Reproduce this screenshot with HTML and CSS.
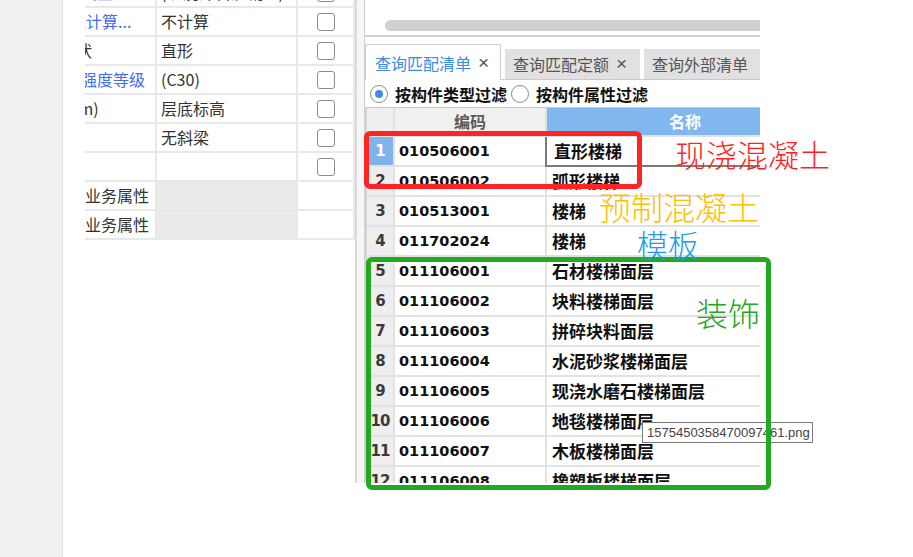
FILE: index.html
```html
<!DOCTYPE html>
<html lang="zh-CN">
<head>
<meta charset="utf-8">
<title>查询匹配清单</title>
<link rel="stylesheet" href="styles.css">
</head>
<body>
<div class="page">
  <aside class="margin"></aside>
  <main class="doc">
    <div class="shot">
      <section class="props">
        <div class="prow">
          <div class="pname blue"><span class="in-a">混凝土类型</span></div>
          <div class="pval">(现浇碎石混凝土)</div>
          <div class="pchk"><span class="cb"></span></div>
        </div>
        <div class="prow">
          <div class="pname blue"><span class="in-b">建筑面积计算...</span></div>
          <div class="pval">不计算</div>
          <div class="pchk"><span class="cb"></span></div>
        </div>
        <div class="prow">
          <div class="pname"><span class="in-c">图元形状</span></div>
          <div class="pval">直形</div>
          <div class="pchk"><span class="cb"></span></div>
        </div>
        <div class="prow">
          <div class="pname blue"><span class="in-a">混凝土强度等级</span></div>
          <div class="pval">(C30)</div>
          <div class="pchk"><span class="cb"></span></div>
        </div>
        <div class="prow">
          <div class="pname"><span class="in-d">底标高(m)</span></div>
          <div class="pval">层底标高</div>
          <div class="pchk"><span class="cb"></span></div>
        </div>
        <div class="prow">
          <div class="pname"><span class="in-h">斜梁</span></div>
          <div class="pval">无斜梁</div>
          <div class="pchk"><span class="cb"></span></div>
        </div>
        <div class="prow">
          <div class="pname"><span class="in-h">备注</span></div>
          <div class="pval"></div>
          <div class="pchk"><span class="cb"></span></div>
        </div>
        <div class="prow">
          <div class="pname"><span class="in-g">钢筋业务属性</span></div>
          <div class="pval gray"></div>
          <div class="pchk"></div>
        </div>
        <div class="prow">
          <div class="pname"><span class="in-g">土建业务属性</span></div>
          <div class="pval gray"></div>
          <div class="pchk"></div>
        </div>
      </section>

      <div class="splitter"></div>

      <section class="query">
        <div class="toppanel"><div class="hscroll"></div></div>
        <div class="tabs">
          <div class="tab active">查询匹配清单<span class="x">×</span></div>
          <div class="tab">查询匹配定额<span class="x">×</span></div>
          <div class="tab">查询外部清单</div>
        </div>
        <div class="filters">
          <label class="radio"><span class="rb on"></span>按构件类型过滤</label>
          <label class="radio"><span class="rb"></span>按构件属性过滤</label>
        </div>
        <div class="grid">
          <div class="grow head"><div class="rn"></div><div class="code">编码</div><div class="name">名称</div></div>
          <div class="grow sel"><div class="rn">1</div><div class="code">010506001</div><div class="name">直形楼梯</div></div>
          <div class="grow"><div class="rn">2</div><div class="code">010506002</div><div class="name">弧形楼梯</div></div>
          <div class="grow"><div class="rn">3</div><div class="code">010513001</div><div class="name">楼梯</div></div>
          <div class="grow"><div class="rn">4</div><div class="code">011702024</div><div class="name">楼梯</div></div>
          <div class="grow"><div class="rn">5</div><div class="code">011106001</div><div class="name">石材楼梯面层</div></div>
          <div class="grow"><div class="rn">6</div><div class="code">011106002</div><div class="name">块料楼梯面层</div></div>
          <div class="grow"><div class="rn">7</div><div class="code">011106003</div><div class="name">拼碎块料面层</div></div>
          <div class="grow"><div class="rn">8</div><div class="code">011106004</div><div class="name">水泥砂浆楼梯面层</div></div>
          <div class="grow"><div class="rn">9</div><div class="code">011106005</div><div class="name">现浇水磨石楼梯面层</div></div>
          <div class="grow"><div class="rn">10</div><div class="code">011106006</div><div class="name">地毯楼梯面层</div></div>
          <div class="grow"><div class="rn">11</div><div class="code">011106007</div><div class="name">木板楼梯面层</div></div>
          <div class="grow"><div class="rn">12</div><div class="code">011106008</div><div class="name">橡塑板楼梯面层</div></div>
        </div>
      </section>
    </div>
  </main>

  <div class="tooltip">1575450358470097461.png</div>
  <div class="mark mark-red"></div>
  <div class="mark mark-green"></div>
  <div class="note note-red">现浇混凝土</div>
  <div class="note note-orange">预制混凝土</div>
  <div class="note note-blue">模板</div>
  <div class="note note-green">装饰</div>
</div>
</body>
</html>
```

FILE: styles.css
```css
* { box-sizing: border-box; margin: 0; padding: 0; }

html, body {
  width: 913px;
  height: 557px;
  overflow: hidden;
  background: #ffffff;
}

body {
  font-family: "Noto Sans CJK SC", "Noto Sans", sans-serif;
  color: #333333;
}

.page {
  position: relative;
  display: flex;
  width: 913px;
  height: 557px;
}

.margin {
  flex: none;
  width: 63px;
  background: #eff0f2;
  border-right: 1px solid #e3e4e7;
}

.doc {
  flex: 1;
  padding-left: 22px;
  background: #ffffff;
}

.shot {
  display: flex;
  width: 675px;
  height: 483px;
  overflow: hidden;
  background: #ffffff;
}

/* ---------- property grid (left) ---------- */
.props {
  flex: none;
  width: 270px;
  margin-top: -21px;
  align-self: flex-start;
}

.prow {
  display: grid;
  grid-template-columns: 72px 141px 57px;
  height: 29px;
}

.prow > div {
  border-right: 2px solid #e8e8e8;
  border-bottom: 2px solid #e8e8e8;
  font-size: 16px;
  line-height: 27px;
  white-space: nowrap;
  overflow: hidden;
}

.pname { color: #333333; }
.pname.blue { color: #3f6cf2; }
.pname span { display: inline-block; }
.in-a { margin-left: -52px; }
.in-b { margin-left: -63px; }
.in-c { margin-left: -57px; }
.in-d { margin-left: -60px; }
.in-g { margin-left: -32px; }
.in-h { margin-left: -60px; }

.pval { padding-left: 4px; color: #333333; }
.pval.gray { background: #ebebeb; }

.pchk {
  display: flex;
  align-items: center;
  justify-content: center;
}

.cb {
  display: block;
  width: 18px;
  height: 18px;
  border: 1.5px solid #8c8c8c;
  border-radius: 3px;
  background: #ffffff;
}

/* ---------- splitter ---------- */
.splitter {
  flex: none;
  width: 10px;
  background: #f6f6f6;
  border-left: 2px solid #d9d9d9;
  border-right: 1px solid #cfcfcf;
}

/* ---------- query pane (right) ---------- */
.query {
  flex: none;
  width: 395px;
  overflow: hidden;
  display: flex;
  flex-direction: column;
}

.query > * { flex: none; }

.toppanel {
  height: 37px;
  padding: 20px 0 0 20px;
  border-bottom: 2px solid #d2d2d2;
}

.hscroll {
  width: 520px;
  height: 11px;
  border-radius: 6px;
  background: #cfcfcf;
}

.tabs {
  display: flex;
  align-items: flex-end;
  gap: 4px;
  height: 43px;
  border-bottom: 1px solid #c9c9c9;
}

.tab {
  flex: none;
  display: flex;
  align-items: center;
  height: 30px;
  width: 135px;
  padding-left: 8px;
  background: #e1e1e1;
  color: #555555;
  font-size: 16px;
  white-space: nowrap;
}

.tab.active {
  height: 36px;
  width: 136px;
  padding-left: 9px;
  background: #ffffff;
  color: #3b8be2;
  border: 1px solid #cccccc;
  border-bottom: none;
  border-radius: 2px 2px 0 0;
  margin-bottom: -1px;
}

.tab .x {
  margin-left: 7px;
  font-family: "Liberation Sans", sans-serif;
  font-size: 19px;
  color: #555555;
}

.filters {
  display: flex;
  align-items: center;
  height: 27px;
  padding-left: 5px;
  gap: 4px;
}

.radio {
  display: flex;
  align-items: center;
  gap: 7px;
  font-size: 16px;
  font-weight: 700;
  color: #111111;
  white-space: nowrap;
}

.rb {
  display: flex;
  align-items: center;
  justify-content: center;
  width: 18px;
  height: 18px;
  border: 1.5px solid #8c8c8c;
  border-radius: 50%;
  background: #ffffff;
}

.rb.on::after {
  content: "";
  width: 8px;
  height: 8px;
  border-radius: 50%;
  background: #3a8ee8;
}

.grid {
  width: 460px;
  border-left: 2px solid #d4d4d4;
}

.grow {
  display: grid;
  grid-template-columns: 28px 152px 278px;
  height: 30px;
}

.grow > div {
  border-bottom: 2px solid #e2e2e2;
  border-right: 2px solid #e2e2e2;
  white-space: nowrap;
  overflow: hidden;
  line-height: 28px;
}

.rn {
  background: #eeeeee;
  text-align: center;
  font-family: "DejaVu Sans", sans-serif;
  font-weight: 700;
  font-size: 15px;
  color: #3a3a3a;
  letter-spacing: -1px;
}

.code {
  padding-left: 4px;
  font-family: "DejaVu Sans", sans-serif;
  font-weight: 700;
  font-size: 14.5px;
  color: #111111;
}

.name {
  padding-left: 5px;
  font-size: 17px;
  font-weight: 700;
  color: #111111;
}

.grow.head {
  border-top: 1px solid #c9c9c9;
}

.grow.head > div {
  line-height: 27px;
}

.head .rn { background: #efefef; }

.head .code {
  background: #f0f0f0;
  padding-left: 0;
  text-align: center;
  font-family: "Noto Sans CJK SC", sans-serif;
  font-size: 16px;
  font-weight: 700;
  color: #5a5a5a;
}

.head .name {
  background: #80b7ee;
  padding-left: 0;
  text-align: center;
  font-size: 16px;
  color: #ffffff;
}

.sel .rn {
  background: #7fb4ea;
  color: #ffffff;
}

.sel .name {
  border-left: 2px solid #7a7a7a;
  border-bottom: 2px solid #7a7a7a;
  margin-left: -2px;
  padding-left: 7px;
}

/* ---------- overlays: annotations and tooltip ---------- */
.tooltip {
  position: absolute;
  left: 642px;
  top: 422px;
  width: 171px;
  height: 21px;
  padding: 0 4px;
  border: 1px solid #7a7a7a;
  background: #ffffff;
  font-family: "Liberation Sans", sans-serif;
  font-size: 13px;
  line-height: 19px;
  color: #444444;
  white-space: nowrap;
}

.mark {
  position: absolute;
  border-radius: 6px;
}

.mark-red {
  left: 364px;
  top: 131px;
  width: 278px;
  height: 58px;
  border: 5px solid #ff2424;
}

.mark-green {
  left: 366px;
  top: 257px;
  width: 405px;
  height: 233px;
  border: 5px solid #1faa1f;
}

.note {
  position: absolute;
  font-family: "Noto Sans CJK SC", sans-serif;
  font-weight: 300;
  font-size: 32px;
  line-height: 1;
  white-space: nowrap;
}

.note-red { left: 675px; top: 138px; color: #ff1f1f; font-size: 31px; }
.note-orange { left: 599px; top: 190px; color: #ffc000; }
.note-blue { left: 637px; top: 228px; color: #1e9bf5; font-size: 31px; }
.note-green { left: 696px; top: 296px; color: #22a822; }
```
